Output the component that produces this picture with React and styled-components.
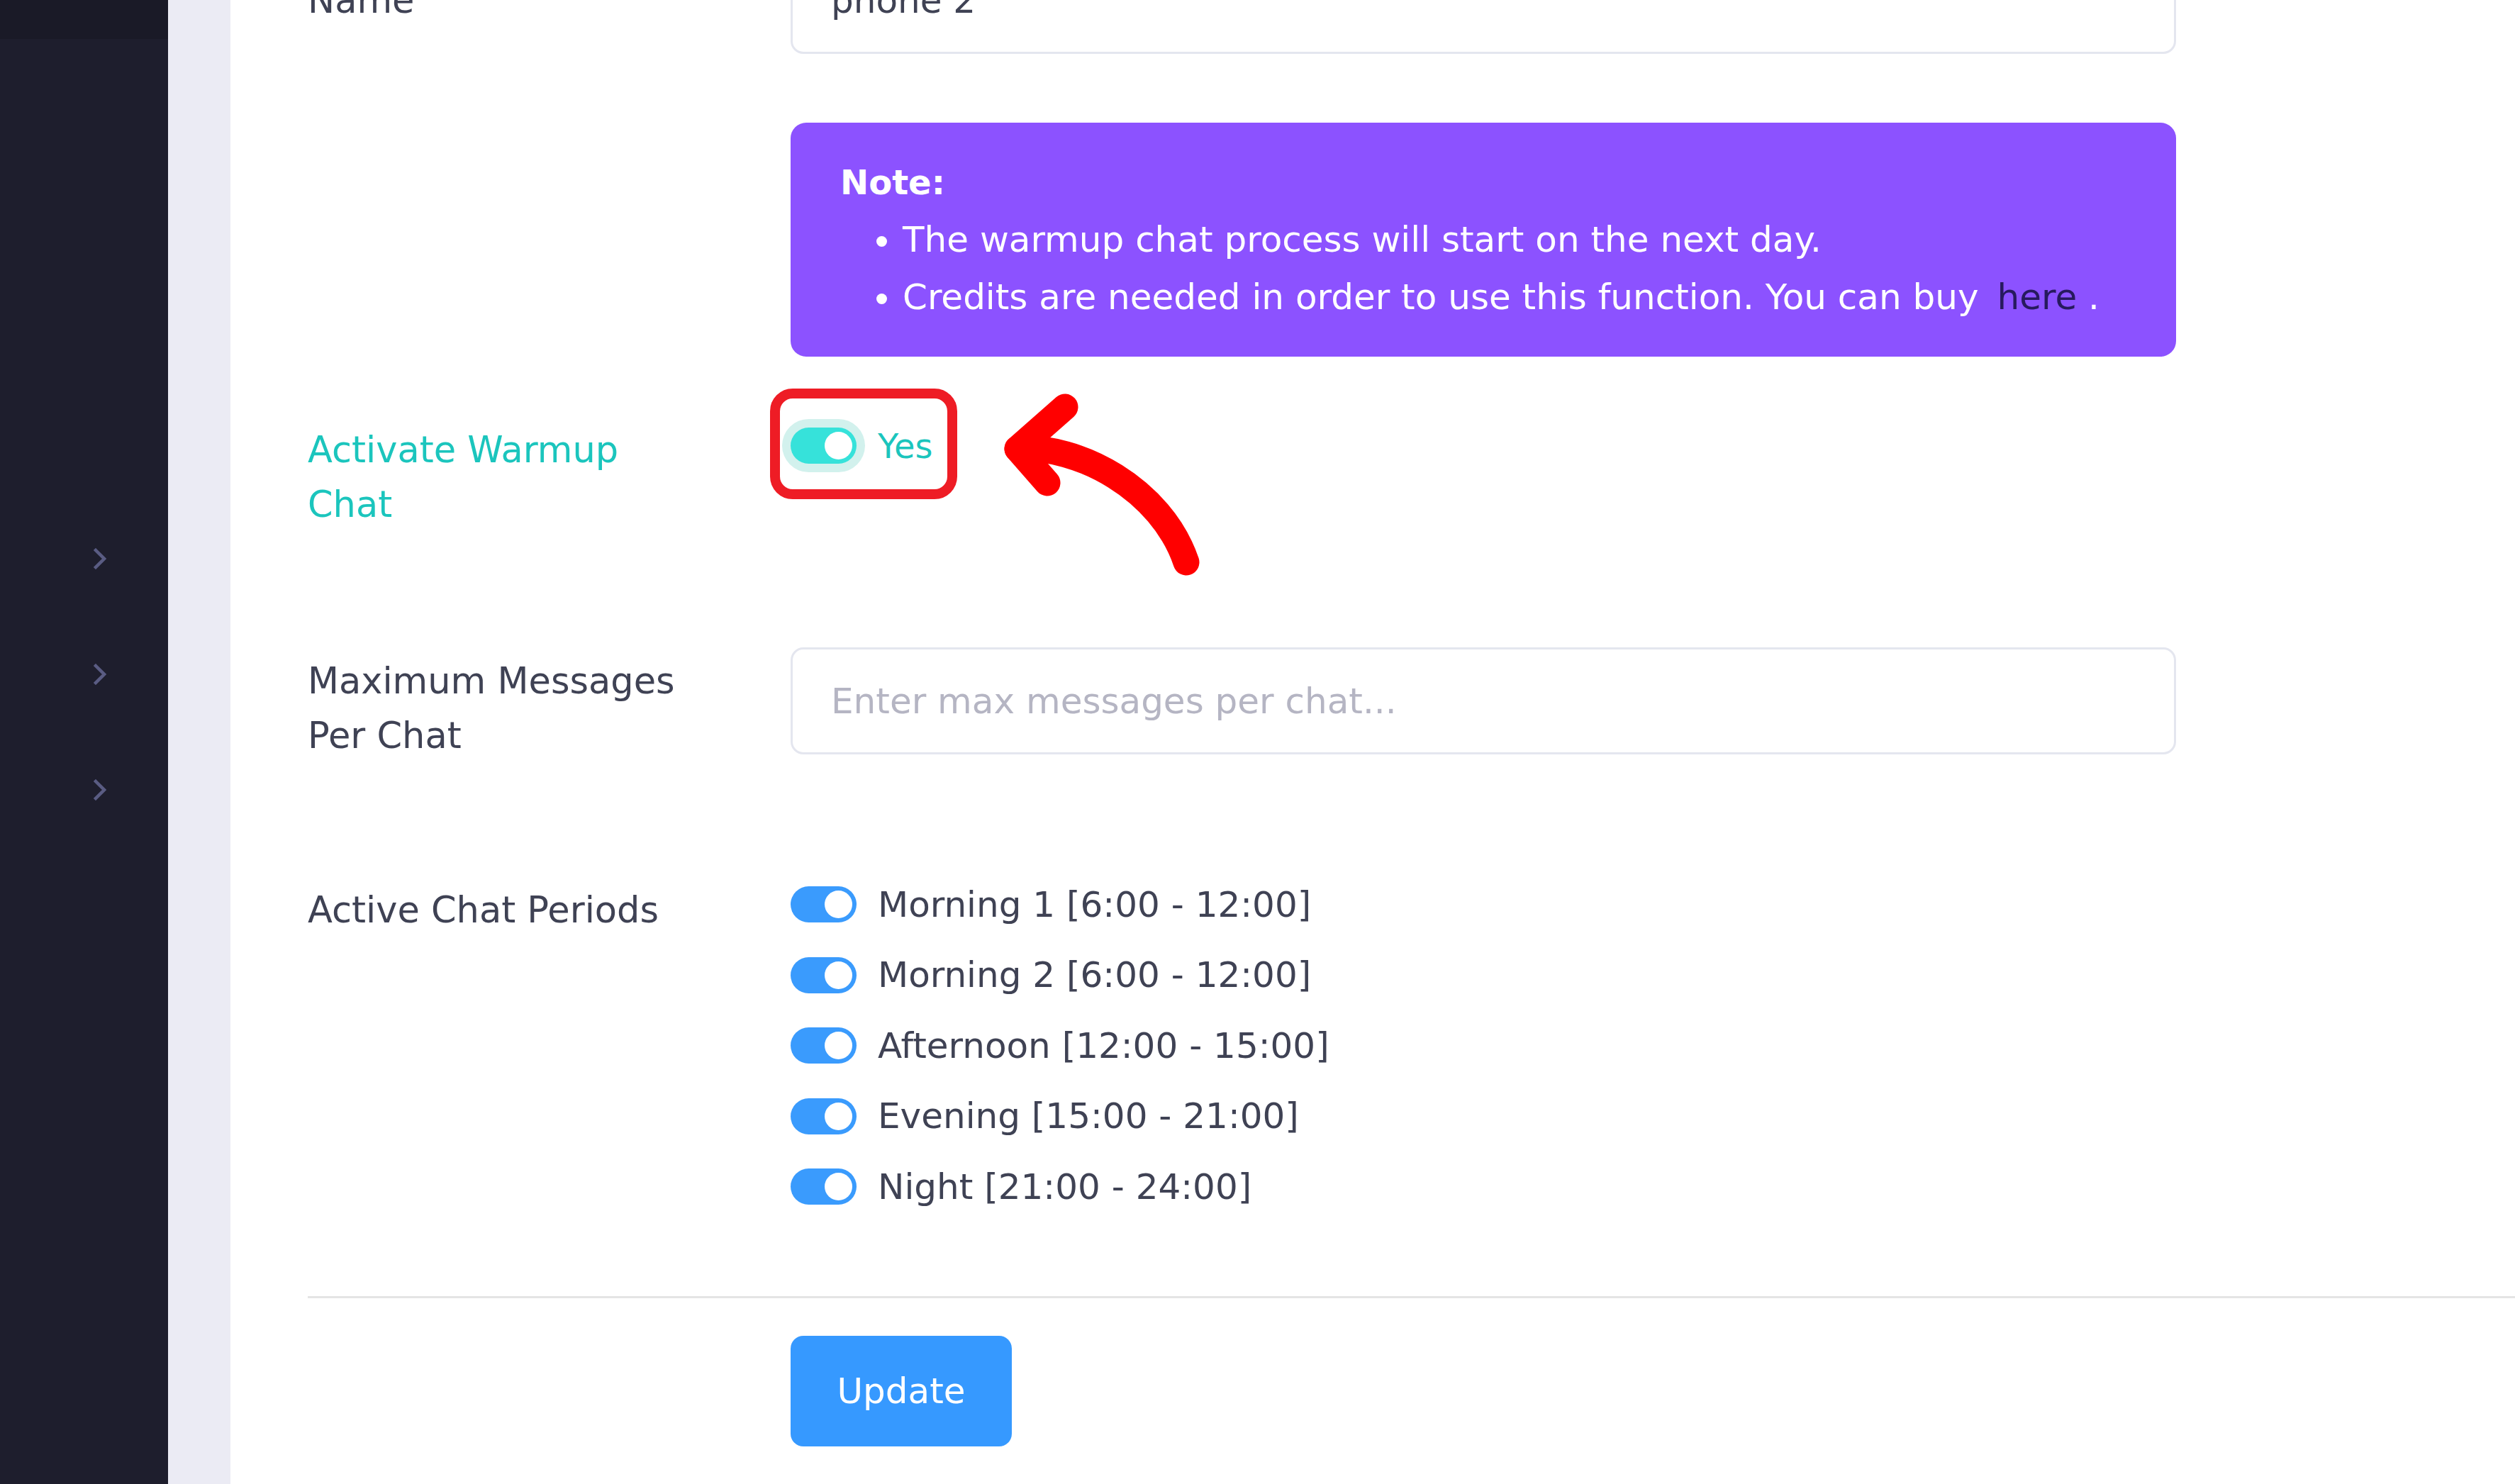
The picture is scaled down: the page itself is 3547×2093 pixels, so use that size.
import React from "react";
import styled, { createGlobalStyle } from "styled-components";

const GlobalStyle = createGlobalStyle`
  html, body {
    margin: 0;
    padding: 0;
    height: 100%;
    overflow: hidden;
    background: #ffffff;
  }
  body {
    font-family: "DejaVu Sans", "Liberation Sans", sans-serif;
    color: #3f4254;
  }
`;

const Layout = styled.div`
  display: flex;
  height: 100vh;
  overflow: hidden;
`;

const Sidebar = styled.aside`
  width: 237px;
  flex-shrink: 0;
  background: #1e1e2d;
  display: flex;
  flex-direction: column;
`;

const SidebarTop = styled.div`
  height: 55px;
  background: #1a1a27;
`;

const NavList = styled.ul`
  list-style: none;
  margin: 0;
  padding: 651px 0 0;
`;

const NavItem = styled.li`
  height: 163px;
  display: flex;
  align-items: center;
  padding-left: 132px;
`;

const Strip = styled.div`
  width: 88px;
  flex-shrink: 0;
  background: #ebebf4;
`;

const Main = styled.main`
  flex: 1;
  background: #ffffff;
  overflow: hidden;
`;

const Content = styled.div`
  padding-left: 109px;
  margin-top: -75px;
`;

const Row = styled.div`
  display: grid;
  grid-template-columns: 681px 1954px;
  align-items: ${(p) => p.$align || "start"};
  margin-top: ${(p) => p.$gap || 0}px;
`;

const Label = styled.label`
  max-width: 550px;
  padding-top: ${(p) => p.$pt || 0}px;
  font-size: 51px;
  line-height: 77px;
  color: ${(p) => p.$color || "#3f4254"};
`;

const TextInput = styled.input`
  box-sizing: border-box;
  width: 100%;
  height: 151px;
  border: 3px solid #e4e6ef;
  border-radius: 18px;
  padding: 0 54px;
  font-family: inherit;
  font-size: 50px;
  color: #3f4254;
  background: #fff;
  outline: none;

  &::placeholder {
    color: #b5b5c3;
  }
`;

const NoteBox = styled.div`
  background: #8c52ff;
  border-radius: 22px;
  padding: 44px 70px 43px;
  color: #ffffff;
  font-size: 50px;
  line-height: 81px;
`;

const NoteTitle = styled.div`
  font-weight: 700;
  font-size: 48px;
`;

const NoteList = styled.ul`
  margin: 0;
  padding-left: 88px;
`;

const BuyLink = styled.a`
  color: #271a5e;
  text-decoration: none;
  margin-left: 10px;
`;

const ToggleCell = styled.div`
  position: relative;
`;

const SwitchLine = styled.div`
  display: flex;
  align-items: center;
  gap: 30px;
  height: ${(p) => p.$h || 75}px;
`;

const Switch = styled.span`
  position: relative;
  flex-shrink: 0;
  width: 93px;
  height: 51px;
  border-radius: 26px;
  background: ${(p) => p.$color};
  box-shadow: ${(p) => (p.$ring ? `0 0 0 12px ${p.$ring}` : "none")};

  &::after {
    content: "";
    position: absolute;
    top: 6px;
    right: 6px;
    width: 39px;
    height: 39px;
    border-radius: 50%;
    background: #ffffff;
  }
`;

const SwitchText = styled.span`
  font-size: ${(p) => p.$size || 50}px;
  color: ${(p) => p.$color || "#3f4254"};
  white-space: nowrap;
`;

const Highlight = styled.div`
  position: absolute;
  left: -29px;
  top: -43px;
  width: 264px;
  height: 156px;
  box-sizing: border-box;
  border: 14px solid #ee1c25;
  border-radius: 32px;
  pointer-events: none;
`;

const ArrowMark = styled.svg`
  position: absolute;
  left: 265px;
  top: -50px;
  overflow: visible;
  pointer-events: none;
`;

const PeriodList = styled.div`
  display: flex;
  flex-direction: column;
`;

const Divider = styled.hr`
  border: none;
  height: 3px;
  background: #e4e4e4;
  margin: 104px 0 0;
`;

const UpdateButton = styled.button`
  width: 312px;
  height: 156px;
  border: none;
  border-radius: 18px;
  background: #3699ff;
  color: #ffffff;
  font-family: inherit;
  font-size: 50px;
  cursor: pointer;
`;

const Chevron = () => (
  <svg width="18" height="30" viewBox="0 0 18 30">
    <polyline
      points="3,3 15,15 3,27"
      fill="none"
      stroke="#5a5c83"
      strokeWidth="4.5"
      strokeLinecap="square"
    />
  </svg>
);

const periods = [
  "Morning 1 [6:00 - 12:00]",
  "Morning 2 [6:00 - 12:00]",
  "Afternoon [12:00 - 15:00]",
  "Evening [15:00 - 21:00]",
  "Night [21:00 - 24:00]",
];

export default function App() {
  return (
    <>
      <GlobalStyle />
      <Layout>
        <Sidebar>
          <SidebarTop />
          <NavList>
            {[0, 1, 2].map((i) => (
              <NavItem key={i}>
                <Chevron />
              </NavItem>
            ))}
          </NavList>
        </Sidebar>
        <Strip />
        <Main>
          <Content>
            <Row $align="center">
              <Label>Name</Label>
              <TextInput value="phone 2" readOnly />
            </Row>

            <Row $gap={97}>
              <div />
              <NoteBox>
                <NoteTitle>Note:</NoteTitle>
                <NoteList>
                  <li>The warmup chat process will start on the next day.</li>
                  <li>
                    Credits are needed in order to use this function. You can buy{" "}
                    <BuyLink href="#">here</BuyLink> .
                  </li>
                </NoteList>
              </NoteBox>
            </Row>

            <Row $gap={88}>
              <Label $pt={5} $color="#1bc5bd">
                Activate Warmup Chat
              </Label>
              <ToggleCell>
                <SwitchLine>
                  <Switch $color="#36e2da" $ring="#d2f1ed" />
                  <SwitchText $size={48} $color="#1bc5bd">
                    Yes
                  </SwitchText>
                </SwitchLine>
                <Highlight />
                <ArrowMark width="340" height="300" viewBox="0 0 340 300">
                  <g
                    fill="none"
                    stroke="#ff0000"
                    strokeWidth="37"
                    strokeLinecap="round"
                    strokeLinejoin="round"
                  >
                    <path d="M55 92 C140 86 258 148 293 252" />
                    <path d="M122 33 L55 92 L97 140" />
                  </g>
                </ArrowMark>
              </ToggleCell>
            </Row>

            <Row $gap={163}>
              <Label $pt={9}>Maximum Messages Per Chat</Label>
              <TextInput placeholder="Enter max messages per chat..." />
            </Row>

            <Row $gap={150}>
              <Label $pt={19}>Active Chat Periods</Label>
              <PeriodList>
                {periods.map((p) => (
                  <SwitchLine key={p} $h={99.5}>
                    <Switch $color="#3a9bfd" />
                    <SwitchText>{p}</SwitchText>
                  </SwitchLine>
                ))}
              </PeriodList>
            </Row>

            <Divider />

            <Row $gap={53}>
              <div />
              <div>
                <UpdateButton>Update</UpdateButton>
              </div>
            </Row>
          </Content>
        </Main>
      </Layout>
    </>
  );
}
